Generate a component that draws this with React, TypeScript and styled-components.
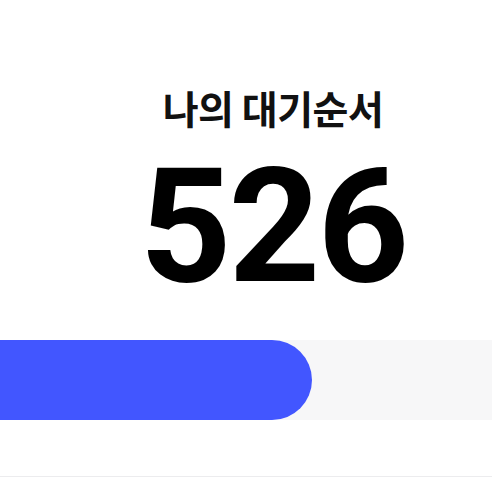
import styled, { createGlobalStyle } from 'styled-components';

const GlobalStyle = createGlobalStyle`
  html, body {
    margin: 0;
    padding: 0;
    background: #ffffff;
  }
  body {
    font-family: Roboto, "Noto Sans CJK KR", sans-serif;
  }
`;

const Page = styled.div`
  width: 492px;
  height: 492px;
  display: flex;
  flex-direction: column;
  align-items: stretch;
  overflow: hidden;
`;

const Summary = styled.div`
  display: flex;
  flex-direction: column;
  align-items: center;
  padding-left: 54px;
`;

const Heading = styled.h2`
  margin: 85px 0 0;
  font-family: "Noto Sans CJK KR", sans-serif;
  font-size: 39px;
  font-weight: 700;
  line-height: 44px;
  letter-spacing: -0.5px;
  color: #111;
`;

const Count = styled.div`
  margin-top: 38px;
  font-family: Roboto, sans-serif;
  font-size: 160px;
  font-weight: 700;
  line-height: 120px;
  letter-spacing: -3px;
  color: #000;
`;

const Track = styled.div`
  margin-top: 53px;
  height: 80px;
  background: #f7f7f8;
  display: flex;
`;

const Fill = styled.div`
  height: 100%;
  background: #4256ff;
  border-radius: 0 40px 40px 0;
`;

const Divider = styled.div`
  margin-top: 56px;
  height: 1px;
  background: #ececee;
`;

const App = () => {
  const progress = 312 / 492;

  return (
    <Page>
      <GlobalStyle />
      <Summary>
        <Heading>나의 대기순서</Heading>
        <Count>526</Count>
      </Summary>
      <Track>
        <Fill style={{ width: `${progress * 100}%` }} />
      </Track>
      <Divider />
    </Page>
  );
};

export default App;
